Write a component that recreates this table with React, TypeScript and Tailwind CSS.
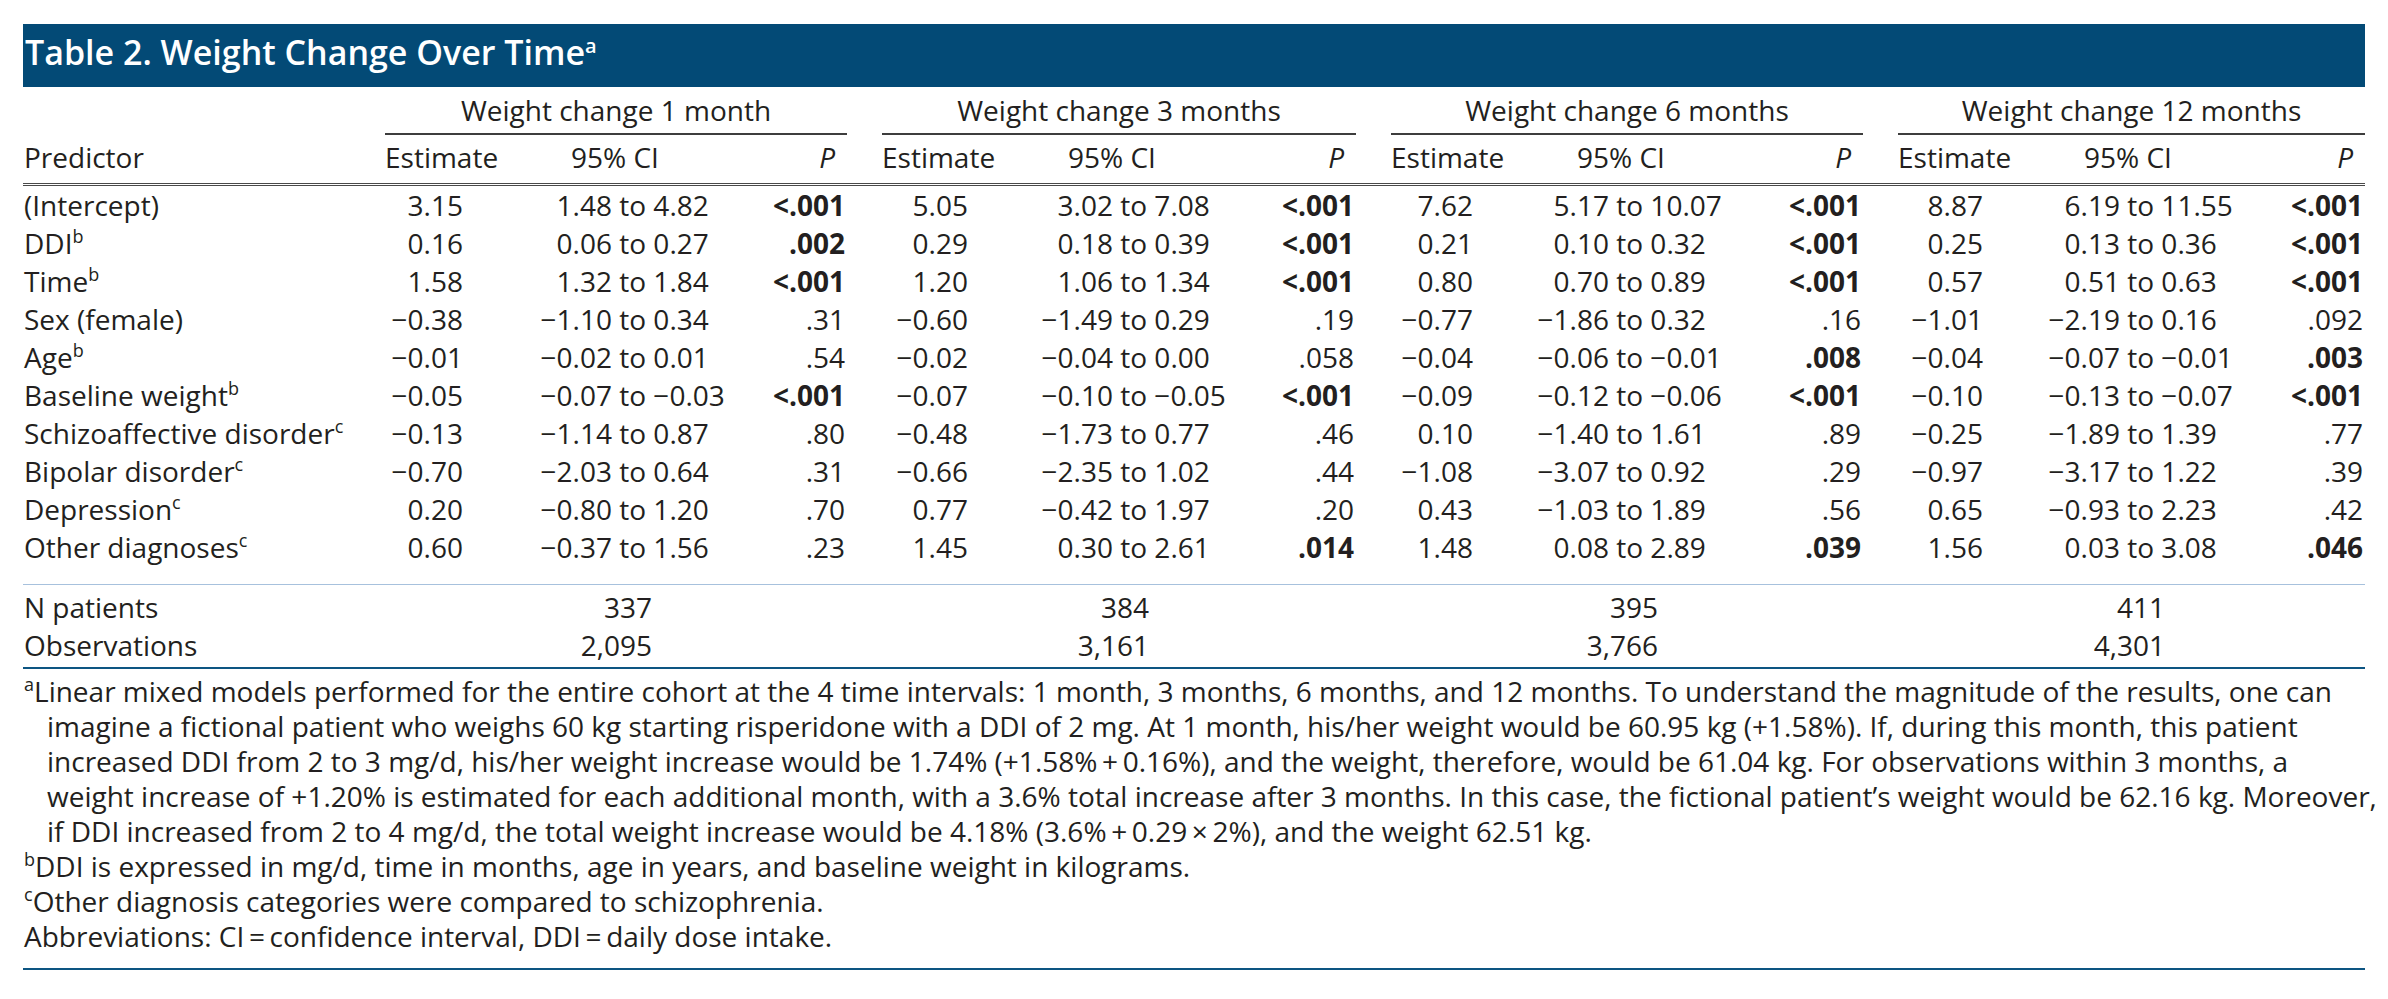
import React from "react";

type Cell = [string, string, string, string, boolean];

const M = "\u2212";

const rows: { label: string; sup?: string; cells: Cell[] }[] = [
  {
    label: "(Intercept)",
    cells: [
      ["3.15", "1.48", "4.82", "<.001", true],
      ["5.05", "3.02", "7.08", "<.001", true],
      ["7.62", "5.17", "10.07", "<.001", true],
      ["8.87", "6.19", "11.55", "<.001", true],
    ],
  },
  {
    label: "DDI",
    sup: "b",
    cells: [
      ["0.16", "0.06", "0.27", ".002", true],
      ["0.29", "0.18", "0.39", "<.001", true],
      ["0.21", "0.10", "0.32", "<.001", true],
      ["0.25", "0.13", "0.36", "<.001", true],
    ],
  },
  {
    label: "Time",
    sup: "b",
    cells: [
      ["1.58", "1.32", "1.84", "<.001", true],
      ["1.20", "1.06", "1.34", "<.001", true],
      ["0.80", "0.70", "0.89", "<.001", true],
      ["0.57", "0.51", "0.63", "<.001", true],
    ],
  },
  {
    label: "Sex (female)",
    cells: [
      [M + "0.38", M + "1.10", "0.34", ".31", false],
      [M + "0.60", M + "1.49", "0.29", ".19", false],
      [M + "0.77", M + "1.86", "0.32", ".16", false],
      [M + "1.01", M + "2.19", "0.16", ".092", false],
    ],
  },
  {
    label: "Age",
    sup: "b",
    cells: [
      [M + "0.01", M + "0.02", "0.01", ".54", false],
      [M + "0.02", M + "0.04", "0.00", ".058", false],
      [M + "0.04", M + "0.06", M + "0.01", ".008", true],
      [M + "0.04", M + "0.07", M + "0.01", ".003", true],
    ],
  },
  {
    label: "Baseline weight",
    sup: "b",
    cells: [
      [M + "0.05", M + "0.07", M + "0.03", "<.001", true],
      [M + "0.07", M + "0.10", M + "0.05", "<.001", true],
      [M + "0.09", M + "0.12", M + "0.06", "<.001", true],
      [M + "0.10", M + "0.13", M + "0.07", "<.001", true],
    ],
  },
  {
    label: "Schizoaffective disorder",
    sup: "c",
    cells: [
      [M + "0.13", M + "1.14", "0.87", ".80", false],
      [M + "0.48", M + "1.73", "0.77", ".46", false],
      ["0.10", M + "1.40", "1.61", ".89", false],
      [M + "0.25", M + "1.89", "1.39", ".77", false],
    ],
  },
  {
    label: "Bipolar disorder",
    sup: "c",
    cells: [
      [M + "0.70", M + "2.03", "0.64", ".31", false],
      [M + "0.66", M + "2.35", "1.02", ".44", false],
      [M + "1.08", M + "3.07", "0.92", ".29", false],
      [M + "0.97", M + "3.17", "1.22", ".39", false],
    ],
  },
  {
    label: "Depression",
    sup: "c",
    cells: [
      ["0.20", M + "0.80", "1.20", ".70", false],
      ["0.77", M + "0.42", "1.97", ".20", false],
      ["0.43", M + "1.03", "1.89", ".56", false],
      ["0.65", M + "0.93", "2.23", ".42", false],
    ],
  },
  {
    label: "Other diagnoses",
    sup: "c",
    cells: [
      ["0.60", M + "0.37", "1.56", ".23", false],
      ["1.45", "0.30", "2.61", ".014", true],
      ["1.48", "0.08", "2.89", ".039", true],
      ["1.56", "0.03", "3.08", ".046", true],
    ],
  },
];

const groups = [
  { title: "Weight change 1 month", est: "w-[78px]", ciL: "w-[149px]", n: "337", obs: "2,095" },
  { title: "Weight change 3 months", est: "w-[86px]", ciL: "w-[145px]", n: "384", obs: "3,161" },
  { title: "Weight change 6 months", est: "w-[82px]", ciL: "w-[136px]", n: "395", obs: "3,766" },
  { title: "Weight change 12 months", est: "w-[85px]", ciL: "w-[137px]", n: "411", obs: "4,301" },
];

const grid = "grid grid-cols-[327px_462px_474px_472px_467px] gap-x-[35px]";

const T = "\u2009";

const fnA = [
  "Linear mixed models performed for the entire cohort at the 4 time intervals: 1 month, 3 months, 6 months, and 12 months. To understand the magnitude of the results, one can",
  "imagine a fictional patient who weighs 60 kg starting risperidone with a DDI of 2 mg. At 1 month, his/her weight would be 60.95 kg (+1.58%). If, during this month, this patient",
  `increased DDI from 2 to 3 mg/d, his/her weight increase would be 1.74% (+1.58%${T}+${T}0.16%), and the weight, therefore, would be 61.04 kg. For observations within 3 months, a`,
  "weight increase of +1.20% is estimated for each additional month, with a 3.6% total increase after 3 months. In this case, the fictional patient\u2019s weight would be 62.16 kg. Moreover,",
  `if DDI increased from 2 to 4 mg/d, the total weight increase would be 4.18% (3.6%${T}+${T}0.29${T}\u00d7${T}2%), and the weight 62.51 kg.`,
];

function Sup({ children }: { children: React.ReactNode }) {
  return <sup className="text-[18px] top-[-0.62em]">{children}</sup>;
}

export default function App() {
  return (
    <div className="w-[2388px] h-[999px] overflow-hidden bg-white font-['Open_Sans',sans-serif] text-[28px] text-[#231f20]">
      <div className="pt-[24px] pl-[23px] w-[2365px]">
        {/* Title bar */}
        <div className="h-[63px] bg-[#034a76] text-white text-[34px] font-semibold leading-[56px] pl-[2px] whitespace-nowrap">
          Table 2. Weight Change Over Time
          <sup className="text-[20px] top-[-0.62em] font-semibold">a</sup>
        </div>

        {/* Group headers */}
        <div className={grid + " leading-[46px] pb-[3px]"}>
          <div />
          {groups.map((g) => (
            <div key={g.title} className="text-center whitespace-nowrap border-b-2 border-[#3d3d3d]">
              {g.title}
            </div>
          ))}
        </div>

        {/* Sub headers */}
        <div className={grid + " leading-[38px] pb-[7px] border-b-[3px] border-double border-[#4a4a4a]"}>
          <div className="pl-px">Predictor</div>
          {groups.map((g) => (
            <div key={g.title} className="flex whitespace-nowrap">
              <span className="w-[180px] shrink-0">Estimate</span>
              <span className="w-[100px] shrink-0 text-center">95% CI</span>
              <span className="ml-auto pr-[12px] italic">P</span>
            </div>
          ))}
        </div>

        {/* Body rows */}
        <div className="pb-[18px] border-b border-[#a7c1dd]">
          {rows.map((r) => (
            <div key={r.label} className={grid + " leading-[38px]"}>
              <div className="pl-px whitespace-nowrap">
                {r.label}
                {r.sup && <Sup>{r.sup}</Sup>}
              </div>
              {r.cells.map((c, i) => (
                <div key={i} className="flex whitespace-nowrap">
                  <span className={groups[i].est + " shrink-0 text-right"}>{c[0]}</span>
                  <span className={groups[i].ciL + " shrink-0 text-right"}>{c[1]}</span>
                  <span className="shrink-0">{"\u00a0to\u00a0" + c[2]}</span>
                  <span className={"ml-auto pr-[2px]" + (c[4] ? " font-bold" : "")}>{c[3]}</span>
                </div>
              ))}
            </div>
          ))}
        </div>

        {/* Totals */}
        <div className="pt-[3px] pb-[3px] border-b-2 border-[#0d5582]">
          <div className={grid + " leading-[38px]"}>
            <div className="pl-px">N patients</div>
            {groups.map((g) => (
              <div key={g.title} className="flex">
                <span className="w-[267px] text-right">{g.n}</span>
              </div>
            ))}
          </div>
          <div className={grid + " leading-[38px]"}>
            <div className="pl-px">Observations</div>
            {groups.map((g) => (
              <div key={g.title} className="flex">
                <span className="w-[267px] text-right">{g.obs}</span>
              </div>
            ))}
          </div>
        </div>

        {/* Footnotes */}
        <div className="pt-[5px] pb-[14px] border-b-2 border-[#0d5582] leading-[35px] whitespace-nowrap">
          {fnA.map((line, i) => (
            <div key={i} className={i === 0 ? "pl-px" : "pl-[24px]"}>
              {i === 0 && <Sup>a</Sup>}
              {line}
            </div>
          ))}
          <div className="pl-px">
            <Sup>b</Sup>DDI is expressed in mg/d, time in months, age in years, and baseline weight in kilograms.
          </div>
          <div className="pl-px">
            <Sup>c</Sup>Other diagnosis categories were compared to schizophrenia.
          </div>
          <div className="pl-px">
            {`Abbreviations: CI${T}=${T}confidence interval, DDI${T}=${T}daily dose intake.`}
          </div>
        </div>
      </div>
    </div>
  );
}
